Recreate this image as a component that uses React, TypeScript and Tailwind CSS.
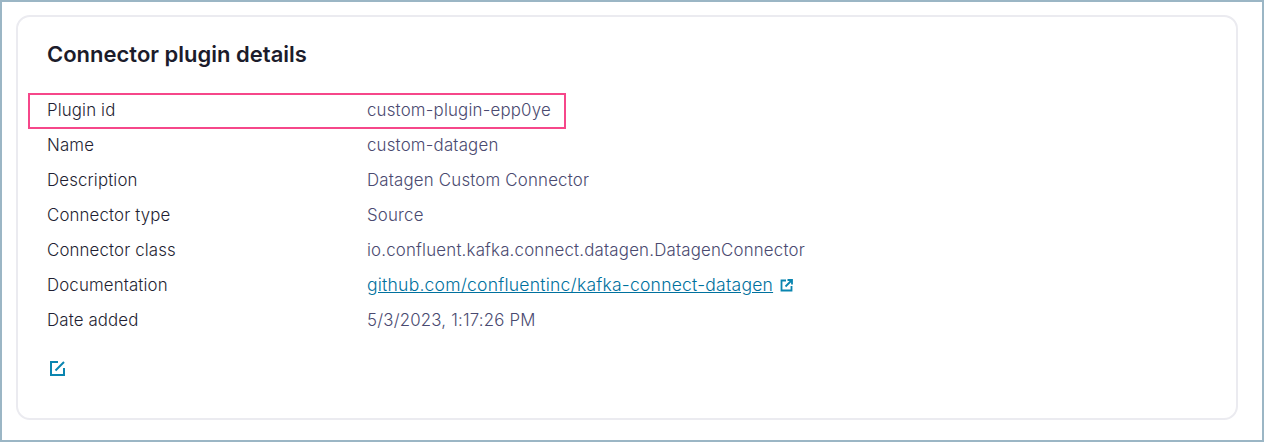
const rows = [
  { label: 'Plugin id', value: 'custom-plugin-epp0ye' },
  { label: 'Name', value: 'custom-datagen' },
  { label: 'Description', value: 'Datagen Custom Connector' },
  { label: 'Connector type', value: 'Source' },
  { label: 'Connector class', value: 'io.confluent.kafka.connect.datagen.DatagenConnector' },
  { label: 'Documentation', value: 'github.com/confluentinc/kafka-connect-datagen', link: true },
  { label: 'Date added', value: '5/3/2023, 1:17:26 PM' },
];

function EditIcon() {
  return (
    <svg width="17" height="17" viewBox="0 0 17 17" fill="none" stroke="#0a85b0" strokeWidth="2">
      <path d="M9 2H2v13h13V8" />
      <path d="M6.5 10.5 15 2" />
    </svg>
  );
}

function ExternalIcon() {
  return (
    <svg width="13" height="13" viewBox="0 0 13 13" fill="none" stroke="#0a85b0" strokeWidth="1.8">
      <path d="M6 1.5H1.5v10h10V7" />
      <path d="M5.5 7.5 11.5 1.5M7.5 1h4.5v4.5" />
    </svg>
  );
}

export default function App() {
  return (
    <main className="relative h-[442px] w-[1264px] overflow-hidden border-2 border-[#9bb6c5] bg-white pt-[13px] pl-[14px] pr-[24px] font-['Inter',sans-serif]">
      <div className="h-[405px] w-[1222px] rounded-[14px] border-2 border-[#ebebf0] px-[29px] pt-[21px]">
        <h1 className="text-[22px] leading-[32px] font-semibold text-[#1c1c2b]">Connector plugin details</h1>

        <div className="mt-[23px] flex flex-col">
          {rows.map((row) => (
            <div key={row.label} className="flex h-[35px] items-center text-[16.85px] tracking-[0.19px]">
              <span className="w-[320px] font-light tracking-[0.13px] text-[#1f1f33]">{row.label}</span>
              {row.link ? (
                <span className="flex items-center gap-[7px]">
                  <a className="text-[17.55px] font-light tracking-[0.22px] text-[#00719e] underline">{row.value}</a>
                  <ExternalIcon />
                </span>
              ) : (
                <span className="font-light text-[#4a4a70]">{row.value}</span>
              )}
            </div>
          ))}
        </div>

        <div className="mt-[22px] ml-[2px]">
          <EditIcon />
        </div>
      </div>

      {/* highlight around the first row */}
      <div className="absolute top-[91px] left-[26px] h-[36px] w-[538px] border-2 border-[#f6478a]" />
    </main>
  );
}
